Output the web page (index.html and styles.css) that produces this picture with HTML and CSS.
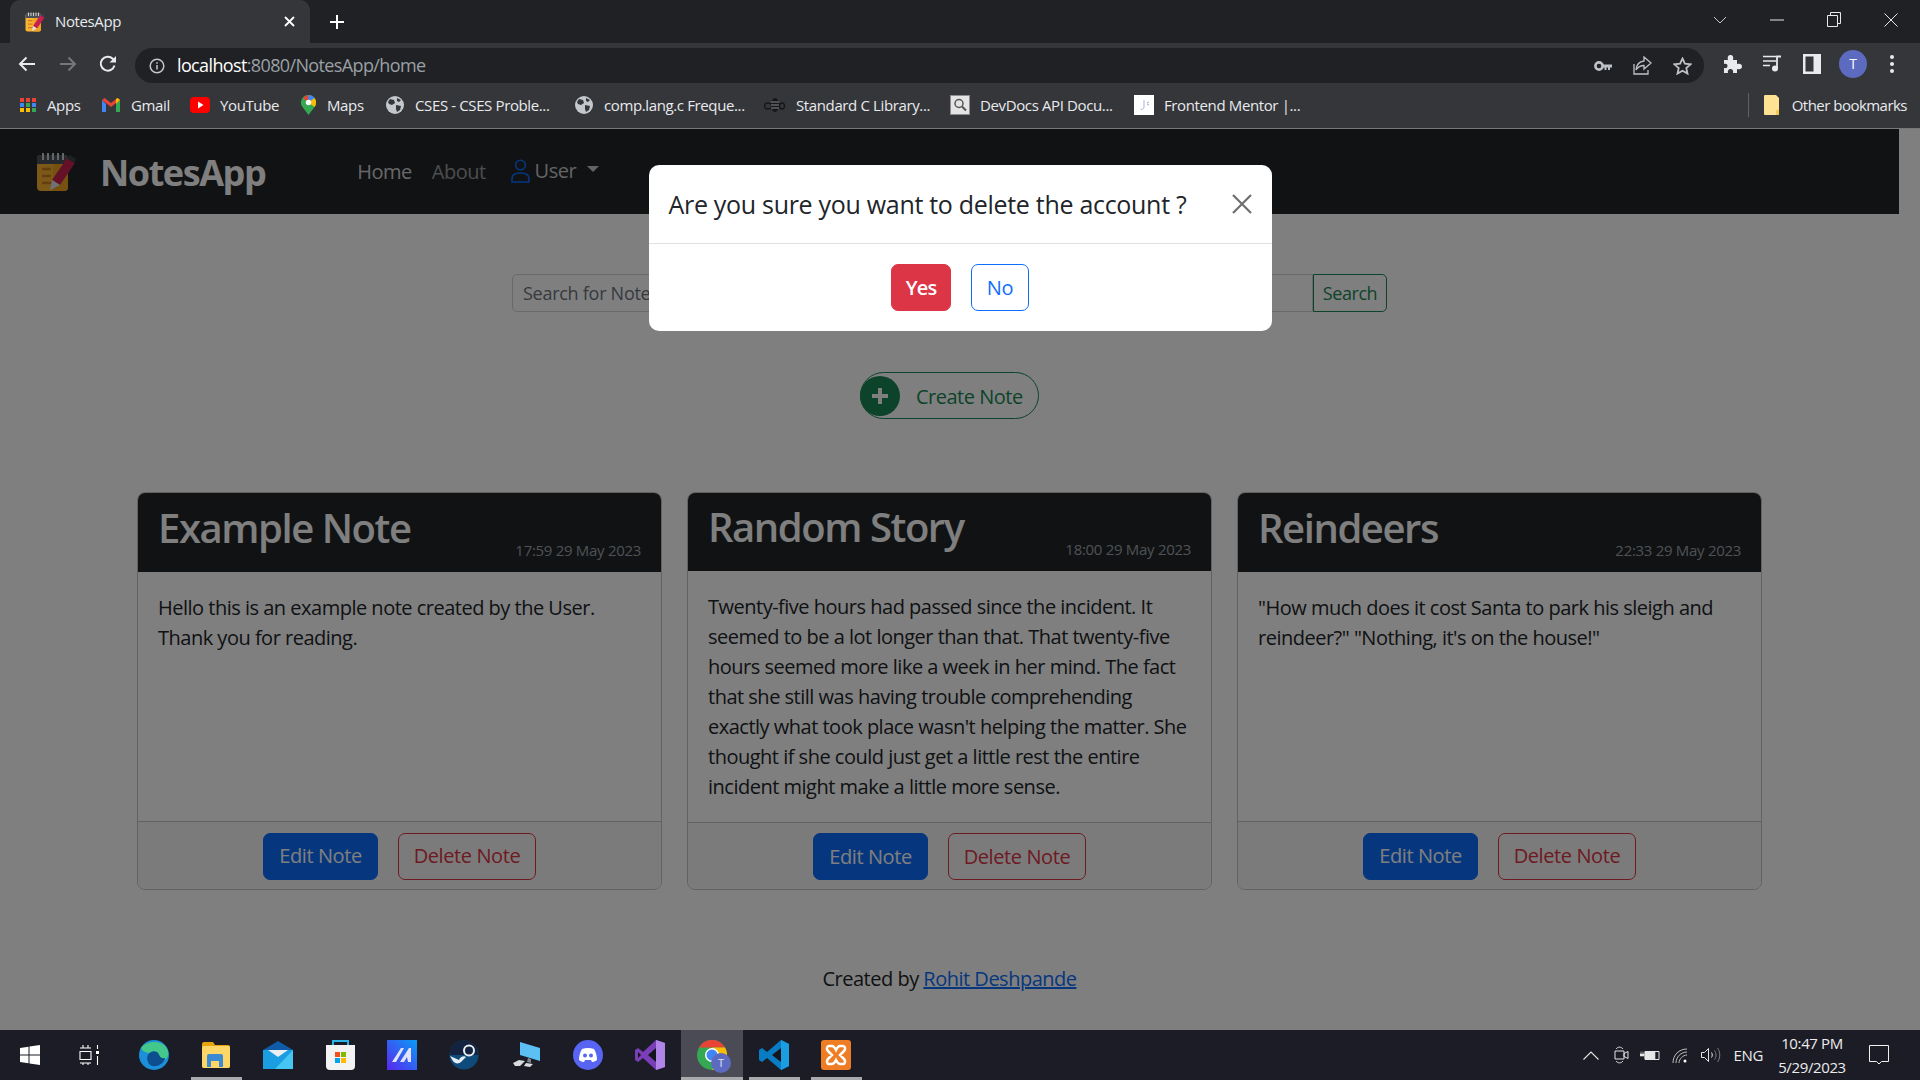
FILE: index.html
```html
<!DOCTYPE html>
<html lang="en">
<head>
  <meta charset="UTF-8" />
  <title>NotesApp</title>
  <link rel="stylesheet" href="styles.css">
</head>
<body>
  <svg class="defs" width="0" height="0">
    <symbol id="noteLogo" viewBox="0 0 40 40">
      <rect x="1" y="3" width="31" height="36" rx="4" fill="#f9b233"/>
      <path d="M17 10h15v25a4 4 0 0 1-4 4H17z" fill="#eea321"/>
      <path d="M1 12V7a4 4 0 0 1 4-4h23a4 4 0 0 1 4 4v5z" fill="#4a5058"/>
      <path d="M7 1v7M12 1v7M17 1v7M22 1v7M27 1v7" stroke="#c9ccd1" stroke-width="2"/>
      <path d="M6 17h9M6 24h9M6 31h11" stroke="#c77f1a" stroke-width="2.5"/>
      <path d="M31 6l8 5-15 22-8-5z" fill="#c8204e"/>
      <path d="M34 3l6 4-2 4-7-5z" fill="#39424c"/>
      <path d="M16 28l8 5-10 5z" fill="#dfe3e8"/>
    </symbol>
    <symbol id="globe" viewBox="0 0 18 18">
      <circle cx="9" cy="9" r="9" fill="#c4c7cb"/>
      <path d="M4 3l4 1 1 3-3 2-3-1-1-2zM10 9l5 1-1 4-3 2-1-3zM11 2l4 2-2 2-2-1z" fill="#35363a"/>
    </symbol>
  </svg>

  <div class="chrome">
    <div class="tabstrip">
      <div class="tab">
        <svg class="favicon" width="20" height="20"><use href="#noteLogo"/></svg>
        <span class="tab-title">NotesApp</span>
        <svg class="tab-close" width="11" height="11" viewBox="0 0 11 11"><path d="M1 1l9 9M10 1l-9 9" stroke="#fff" stroke-width="1.8"/></svg>
      </div>
      <svg class="newtab" width="16" height="16" viewBox="0 0 16 16"><path d="M8 1v14M1 8h14" stroke="#fff" stroke-width="2"/></svg>
      <div class="winctl">
        <svg width="14" height="8" viewBox="0 0 14 8"><path d="M1 1l6 6 6-6" fill="none" stroke="#c8c9cb"/></svg>
        <svg width="14" height="2" viewBox="0 0 14 2"><path d="M0 1h14" stroke="#e8e8e8"/></svg>
        <svg width="14" height="15" viewBox="0 0 14 15"><path d="M.5 3.5h10v11H.5zM3.5 3V.5h10v11H11" fill="none" stroke="#e8e8e8"/></svg>
        <svg width="14" height="14" viewBox="0 0 14 14"><path d="M.5.5l13 13M13.5.5l-13 13" stroke="#e8e8e8"/></svg>
      </div>
    </div>

    <div class="toolbar">
      <svg width="18" height="16" viewBox="0 0 18 16"><path d="M17 8H2M8.500 1.500L2 8l6.500 6.500" fill="none" stroke="#e8eaed" stroke-width="2"/></svg>
      <svg class="tool-fwd" width="18" height="16" viewBox="0 0 18 16"><path d="M1 8h15M9.500 1.500L16 8l-6.500 6.500" fill="none" stroke="#75777a" stroke-width="2"/></svg>
      <svg class="tool-reload" width="18" height="18" viewBox="0 0 18 18"><path d="M15.500 10.500A7 7 0 1 1 13.800 3.800L16 6" fill="none" stroke="#e8eaed" stroke-width="2"/><path d="M17 1v6.500h-6.500z" fill="#e8eaed"/></svg>
      <div class="omnibox">
        <svg width="16" height="16" viewBox="0 0 16 16"><circle cx="8" cy="8" r="6.800" fill="none" stroke="#c4c7c9" stroke-width="1.500"/><path d="M8 7v4.500M8 4.300v1.500" stroke="#c4c7c9" stroke-width="1.500"/></svg>
        <span class="url"><span class="url-host">localhost</span>:8080/NotesApp/home</span>
        <div class="omni-icons">
          <svg width="18" height="12" viewBox="0 0 18 12"><circle cx="5" cy="6" r="3.600" fill="none" stroke="#bdc1c6" stroke-width="2.600"/><path d="M9 4.500h9v3h-2v2.500h-2V7.500h-1.500V10h-2V7.500H9z" fill="#bdc1c6"/></svg>
          <svg width="19" height="19" viewBox="0 0 19 19"><path d="M1 8v10h14v-4" fill="none" stroke="#bdc1c6" stroke-width="1.300"/><path d="M11 1l7 6-7 6V9.500C7 9.500 5 11 3 14c.5-5 3-8.500 8-9z" fill="none" stroke="#bdc1c6" stroke-width="1.300"/></svg>
          <svg width="19" height="18" viewBox="0 0 19 18"><path d="M9.500 1.500l2.400 5.200 5.600.6-4.200 3.800 1.200 5.500-5-2.900-5 2.900 1.200-5.500L1.500 7.300l5.600-.6z" fill="none" stroke="#bdc1c6" stroke-width="1.800"/></svg>
        </div>
      </div>
      <div class="tool-right">
        <svg width="19" height="19" viewBox="0 0 19 19"><path d="M1 6h4c-1-4 1-5 2.500-5S11 2 10 6h4v4c4-1 5 1 5 2.500S18 16 14 15v4h-4c.6-3-1-4-2.500-4S4.400 16 5 19H1v-5c2.500.6 3.500-.5 3.500-2S3.500 9.500 1 10z" fill="#e8eaed"/></svg>
        <svg width="19" height="17" viewBox="0 0 19 17"><path d="M0 1.500h13M0 6h13M0 10.500h7" stroke="#e8eaed" stroke-width="1.600"/><path d="M14 13V1.500h4" fill="none" stroke="#e8eaed" stroke-width="1.800"/><circle cx="12" cy="13.500" r="3" fill="#e8eaed"/></svg>
        <svg width="18" height="20" viewBox="0 0 18 20"><path d="M0 0h18v20H0z" fill="#e8eaed"/><path d="M2.500 2.500h8v15h-8z" fill="#35363a"/></svg>
        <span class="avatar">T</span>
        <svg class="tool-menu" width="4" height="18" viewBox="0 0 4 18"><circle cx="2" cy="2" r="2" fill="#e8eaed"/><circle cx="2" cy="9" r="2" fill="#e8eaed"/><circle cx="2" cy="16" r="2" fill="#e8eaed"/></svg>
      </div>
    </div>

    <div class="bookmarks">
      <a class="bm bm-apps">
        <svg width="16" height="16" viewBox="0 0 16 16">
          <path d="M0 1h4v4H0z" fill="#ea4335"/><path d="M6 1h4v4H6z" fill="#ea4335"/><path d="M12 1h4v4h-4z" fill="#ea4335"/>
          <path d="M0 6h4v4H0z" fill="#4285f4"/><path d="M6 6h4v4H6z" fill="#34a853"/><path d="M12 6h4v4h-4z" fill="#4285f4"/>
          <path d="M0 11h4v4H0z" fill="#fbbc04"/><path d="M6 11h4v4H6z" fill="#fbbc04"/><path d="M12 11h4v4h-4z" fill="#34a853"/>
        </svg>Apps</a>
      <a class="bm bm-gmail">
        <svg width="18" height="14" viewBox="0 0 18 14"><path d="M0 2v12h4V6z" fill="#4285f4"/><path d="M14 6v8h4V2z" fill="#34a853"/><path d="M0 2l9 7 9-7-2.500-2L9 5 2.500 0z" fill="#ea4335"/><path d="M14 6l4-4-2.500-2L14 1z" fill="#fbbc04"/></svg>Gmail</a>
      <a class="bm bm-youtube">
        <svg width="20" height="16" viewBox="0 0 20 16"><rect width="20" height="16" rx="4" fill="#f00"/><path d="M8 4.500l5.500 3.500L8 11.500z" fill="#fff"/></svg>YouTube</a>
      <a class="bm bm-maps">
        <svg width="15" height="20" viewBox="0 0 15 20"><path d="M7.500 0a7.500 7.500 0 0 1 6 12L7.500 20 1.500 12a7.500 7.500 0 0 1 6-12z" fill="#34a853"/><path d="M2 3.500A7.500 7.500 0 0 1 7.500 0v7z" fill="#ea4335"/><path d="M7.500 0a7.500 7.500 0 0 1 6 3L7.500 7.500z" fill="#4285f4"/><path d="M13.500 3a7.500 7.500 0 0 1 0 9L7.500 7.500z" fill="#fbbc04"/><circle cx="7.500" cy="7.500" r="2.700" fill="#fff"/></svg>Maps</a>
      <a class="bm bm-cses"><svg width="18" height="18"><use href="#globe"/></svg>CSES - CSES Proble...</a>
      <a class="bm bm-comp"><svg width="18" height="18"><use href="#globe"/></svg>comp.lang.c Freque...</a>
      <a class="bm bm-std">
        <svg width="21" height="16" viewBox="0 0 21 16"><ellipse cx="11" cy="8" rx="4" ry="7" fill="#15161a"/><ellipse cx="4" cy="9" rx="3.500" ry="3" fill="none" stroke="#15161a" stroke-width="1.300"/><ellipse cx="18" cy="9" rx="2.500" ry="3" fill="none" stroke="#15161a" stroke-width="1.300"/><path d="M7 5h8M7 8h8M7 11h8" stroke="#8a8c90"/></svg>Standard C Library...</a>
      <a class="bm bm-dev">
        <svg width="20" height="20" viewBox="0 0 20 20"><rect x=".5" y=".5" width="19" height="19" fill="#e4e4e4" stroke="#8c8c8c"/><circle cx="9" cy="8.500" r="4" fill="none" stroke="#555" stroke-width="1.500"/><path d="M12 11.500l4 4" stroke="#555" stroke-width="2"/></svg>DevDocs API Docu...</a>
      <a class="bm bm-fm">
        <svg width="20" height="20" viewBox="0 0 20 20"><rect width="20" height="20" fill="#fff"/><path d="M10 5v7c0 2-2 3-3.500 2" fill="none" stroke="#a7b5dd"/><path d="M13 8l2-1M13 9l2 1" stroke="#9ca6c4"/></svg>Frontend Mentor |...</a>
      <div class="bm-other">
        <svg width="15" height="20" viewBox="0 0 15 20"><path d="M0 1a1 1 0 0 1 1-1h11l3 3v16a1 1 0 0 1-1 1H1a1 1 0 0 1-1-1z" fill="#fde293"/><path d="M12 20v-5h3v5z" fill="#f2c94c"/></svg>
        <span>Other bookmarks</span>
      </div>
    </div>
  </div>

  <div class="page">
    <div class="app">
      <nav class="navbar">
        <svg class="brand-logo" width="40" height="40"><use href="#noteLogo"/></svg>
        <span class="brand">NotesApp</span>
        <a class="nav-link nav-active">Home</a>
        <a class="nav-link">About</a>
        <a class="nav-link nav-user">
          <svg width="19" height="24" viewBox="0 0 19 24"><circle cx="9.500" cy="6" r="4.800" fill="none" stroke="#0d6efd" stroke-width="1.600"/><path d="M1 23v-3.500C1 16 4 14 9.500 14S18 16 18 19.500V23z" fill="none" stroke="#0d6efd" stroke-width="1.600"/></svg>
          <span>User</span><i class="caret"></i>
        </a>
      </nav>

      <form class="search">
        <input class="search-input" type="text" placeholder="Search for Notes">
        <button class="search-btn" type="button">Search</button>
      </form>

      <div class="create-row">
        <a class="create-btn">
          <span class="create-icon">
            <svg width="18" height="18" viewBox="0 0 18 18"><path d="M9 1v16M1 9h16" stroke="#fff" stroke-width="4"/></svg>
          </span>
          <span class="create-label">Create Note</span>
        </a>
      </div>

      <section class="notes">
        <article class="note-card">
          <header class="note-head">
            <h2>Example Note</h2>
            <small>17:59 29 May 2023</small>
          </header>
          <p class="note-body">Hello this is an example note created by the User. Thank you for reading.</p>
          <footer class="note-foot">
            <a class="btn btn-edit">Edit Note</a>
            <a class="btn btn-delete">Delete Note</a>
          </footer>
        </article>
        <article class="note-card">
          <header class="note-head">
            <h2>Random Story</h2>
            <small>18:00 29 May 2023</small>
          </header>
          <p class="note-body">Twenty-five hours had passed since the incident. It seemed to be a lot longer than that. That twenty-five hours seemed more like a week in her mind. The fact that she still was having trouble comprehending exactly what took place wasn't helping the matter. She thought if she could just get a little rest the entire incident might make a little more sense.</p>
          <footer class="note-foot">
            <a class="btn btn-edit">Edit Note</a>
            <a class="btn btn-delete">Delete Note</a>
          </footer>
        </article>
        <article class="note-card">
          <header class="note-head">
            <h2>Reindeers</h2>
            <small>22:33 29 May 2023</small>
          </header>
          <p class="note-body">"How much does it cost Santa to park his sleigh and reindeer?" "Nothing, it's on the house!"</p>
          <footer class="note-foot">
            <a class="btn btn-edit">Edit Note</a>
            <a class="btn btn-delete">Delete Note</a>
          </footer>
        </article>
      </section>

      <p class="credit">Created by <a href="#">Rohit Deshpande</a></p>
    </div>

    <div class="backdrop">
      <div class="modal">
        <div class="modal-head">
          <h5>Are you sure you want to delete the account ?</h5>
          <svg width="20" height="20" viewBox="0 0 20 20"><path d="M1 1l18 18M19 1L1 19" stroke="#6f6f6f" stroke-width="2.200"/></svg>
        </div>
        <div class="modal-body">
          <a class="btn btn-yes">Yes</a>
          <a class="btn btn-no">No</a>
        </div>
      </div>
    </div>
  </div>

  <div class="taskbar">
    <div class="task-start">
      <svg width="20" height="20" viewBox="0 0 20 20"><path d="M0 3l8.500-1.200V9.500H0zM9.500 1.600L20 0v9.500H9.500zM0 10.500h8.500v7.700L0 17zM9.500 10.500H20V20L9.500 18.400z" fill="#fff"/></svg>
    </div>
    <div class="task-view">
      <svg width="20" height="20" viewBox="0 0 20 20"><path d="M1 3h11M1 18h11M1 6.500h11v8H1z M4 3V0M9 3V0M4 18v2M9 18v2" fill="none" stroke="#fff" stroke-width="1.100"/><rect x="17" y="6" width="3" height="3" fill="#fff"/><path d="M18.500 0v4M18.500 11v9" stroke="#fff" stroke-width="1.100"/></svg>
    </div>
    <div class="task-item">
      <svg width="30" height="30" viewBox="0 0 30 30"><circle cx="15" cy="15" r="15" fill="#1b8fd8"/><path d="M2 8C6 1 25-2 29 11c1 5-1 9-6 9-4 0-3-3-7-5C10 12 5 14 2 8z" fill="#43c78a"/><path d="M9 22c-3-7 3-13 9-10 3 2 2 7 8 6-2 9-15 11-17 4z" fill="#0d4e8f"/></svg>
    </div>
    <div class="task-item task-open">
      <svg width="28" height="26" viewBox="0 0 28 26"><path d="M0 2a2 2 0 0 1 2-2h9l2 3h13a2 2 0 0 1 2 2v19a2 2 0 0 1-2 2H2a2 2 0 0 1-2-2z" fill="#e5a50e"/><rect y="4" width="28" height="22" rx="2" fill="#fcd768"/><path d="M5 25V14a2 2 0 0 1 2-2h12a2 2 0 0 1 2 2v11h-4v-6H9v6z" fill="#3a8ad4"/></svg>
    </div>
    <div class="task-item">
      <svg width="30" height="28" viewBox="0 0 30 28"><path d="M0 9L15 0l15 9z" fill="#0f5ba7"/><path d="M0 9h30v19H0z" fill="#1b9de2"/><path d="M5 9h20l-10 7z" fill="#e9eef2"/><path d="M30 9v19H12z" fill="#46c6f2"/></svg>
    </div>
    <div class="task-item">
      <svg width="29" height="30" viewBox="0 0 29 30"><path d="M7 6V1h15v5" fill="none" stroke="#2bb3e6" stroke-width="2"/><path d="M0 5h29v21a4 4 0 0 1-4 4H4a4 4 0 0 1-4-4z" fill="#f3f3f3"/><path d="M9 12h5v5H9z" fill="#f25022"/><path d="M15 12h5v5h-5z" fill="#7fba00"/><path d="M9 18h5v5H9z" fill="#00a4ef"/><path d="M15 18h5v5h-5z" fill="#ffb900"/></svg>
    </div>
    <div class="task-item">
      <svg width="30" height="30" viewBox="0 0 30 30"><defs><linearGradient id="appGrad" x1="0" y1="1" x2="1" y2="0"><stop offset="0" stop-color="#5a26f0"/><stop offset="1" stop-color="#0a9cf5"/></linearGradient></defs><rect width="30" height="30" fill="url(#appGrad)"/><path d="M5 22L14 8h3L9 22zM13 22l9-14h2v14h-3l-1-5-3 5z" fill="#e4e2ff"/></svg>
    </div>
    <div class="task-item">
      <svg width="30" height="30" viewBox="0 0 30 30"><circle cx="15" cy="15" r="14.500" fill="#0e4a7a"/><path d="M1 12C2 6 8 .5 15 .5 23 .5 29 7 29 15H1z" fill="#13223f"/><circle cx="20" cy="10.500" r="5" fill="none" stroke="#e8edf2" stroke-width="2"/><path d="M1 16l9 4c1-3 5-5 7-3l-5 5c-2 2-6 2-8-1z" fill="#e8edf2"/></svg>
    </div>
    <div class="task-item">
      <svg width="28" height="28" viewBox="0 0 28 28"><path d="M8 1l20 6v13L8 14z" fill="#5cc0f5"/><path d="M16 17l3 1v4l-4-1z" fill="#7d8389"/><path d="M1 22l6-3 6 1-5 5H3zM14 22l7 1-3 3-6-1z" fill="#d8dadd"/></svg>
    </div>
    <div class="task-item">
      <svg width="30" height="30" viewBox="0 0 30 30"><circle cx="15" cy="15" r="15" fill="#5865f2"/><path d="M9 9c4-1.500 8-1.500 12 0 2 3 3 7 3 11-1.500 1-3 2-5 2l-1-2h-6l-1 2c-2 0-3.500-1-5-2 0-4 1-8 3-11z" fill="#fff"/><circle cx="12" cy="15.500" r="2" fill="#5865f2"/><circle cx="18" cy="15.500" r="2" fill="#5865f2"/></svg>
    </div>
    <div class="task-item">
      <svg width="30" height="30" viewBox="0 0 30 30"><path d="M21 0l9 3v24l-9 3-13-12-5 4-3-2V10l3-2 5 4z" fill="#7a3fb8"/><path d="M21 0l9 3v24l-9 3z" fill="#b184e8"/><path d="M21 8l-8 7 8 7z" fill="#14151d"/><path d="M3 12v6l3-3z" fill="#14151d"/></svg>
    </div>
    <div class="task-item task-chrome">
      <svg width="30" height="30" viewBox="0 0 30 30"><circle cx="15" cy="15" r="15" fill="#34a853"/><path d="M2 7.500A15 15 0 0 1 28 7.500H15z" fill="#ea4335"/><path d="M15 7.500h13A15 15 0 0 1 15 30l6-12z" fill="#fbbc04"/><circle cx="15" cy="15" r="7" fill="#fff"/><circle cx="15" cy="15" r="5.500" fill="#4285f4"/></svg>
      <span class="task-badge">T</span>
    </div>
    <div class="task-item task-open">
      <svg width="30" height="30" viewBox="0 0 30 30"><path d="M22 0l8 4v22l-8 4-14-12-5 4-3-2V10l3-2 5 4z" fill="#0a7cc4"/><path d="M22 0l8 4v22l-8 4z" fill="#1b9de2"/><path d="M22 8l-9 7 9 7z" fill="#14151d"/></svg>
    </div>
    <div class="task-item task-open">
      <svg width="30" height="30" viewBox="0 0 30 30"><rect width="30" height="30" rx="3" fill="#ee7d23"/><path d="M8 6h3c2 0 3 2 4 4 1-2 2-4 4-4h3c2 0 3 3 1 5l-4 4 4 4c2 2 1 5-1 5h-3c-2 0-3-2-4-4-1 2-2 4-4 4H8c-2 0-3-3-1-5l4-4-4-4c-2-2-1-5 1-5z" fill="none" stroke="#fff" stroke-width="2.500"/></svg>
    </div>
    <div class="tray">
      <svg width="16" height="9" viewBox="0 0 16 9"><path d="M.5 8.500L8 1l7.500 7.500" fill="none" stroke="#e6e6e6" stroke-width="1.100"/></svg>
      <svg class="tray-video" width="15" height="18" viewBox="0 0 15 18"><path d="M1 5h9v8H1zM10 7.500l4-2v7l-4-2zM2 3c2-2.500 5-2.500 7 0M2 15c2 2.500 5 2.500 7 0" fill="none" stroke="#e6e6e6"/></svg>
      <svg class="tray-battery" width="20" height="12" viewBox="0 0 20 12"><path d="M5 2.500h14v8H5z" fill="none" stroke="#e6e6e6"/><path d="M5 3h10v7H5zM0 5h4v2H0zM1 2.500v2.500M3 2.500v2.500" fill="#e6e6e6" stroke="#e6e6e6" stroke-width=".6"/></svg>
      <svg width="16" height="15" viewBox="0 0 16 15"><path d="M1 15C1 7 7 1 15 1M4 15c0-6 5-11 11-11M7 15c0-4 4-8 8-8" fill="none" stroke="#bfbfbf"/><circle cx="13" cy="13" r="1.500" fill="#fff"/></svg>
      <svg class="tray-sound" width="20" height="16" viewBox="0 0 20 16"><path d="M.5 5.500h3l4-4v13l-4-4h-3z" fill="none" stroke="#e6e6e6"/><path d="M10.500 5.500c1 1.500 1 3.500 0 5" fill="none" stroke="#e6e6e6"/><path d="M13.500 3.500c2 2.500 2 6.500 0 9M16.500 1c3 3.500 3 10.500 0 14" fill="none" stroke="#7d7e82"/></svg>
      <span class="tray-lang">ENG</span>
      <span class="tray-clock">10:47 PM<br>5/29/2023</span>
      <svg class="tray-note" width="20" height="20" viewBox="0 0 20 20"><path d="M.5.500h19v16h-7L10 19l-2.500-2.500h-7z" fill="none" stroke="#f0f0f0"/></svg>
    </div>
  </div>
</body>
</html>
```
FILE: styles.css
```css
* {
  box-sizing: border-box;
  letter-spacing: -0.025em;
}
body {
  font-family: "Open Sans", "Noto Sans", sans-serif;
  margin: 0;
  height: 1080px;
  overflow: hidden;
  display: flex;
  flex-direction: column;
  background-color: #fff;
  color: #212529;
  font-size: 20px;
  line-height: 30px;
}
a {
  text-decoration: none;
}
.defs {
  position: absolute;
}

/* browser */
.chrome {
  height: 129px;
  background-color: #35363a;
  border-bottom: 1px solid #77787a;
  color: #e8eaed;
}
.tabstrip {
  height: 43px;
  background-color: #202124;
  display: flex;
  align-items: center;
  padding-left: 10px;
}
.tab {
  width: 300px;
  height: 43px;
  background-color: #35363a;
  border-radius: 10px 10px 0 0;
  display: flex;
  align-items: center;
  padding: 0 15px;
  font-size: 15px;
}
.tab-title {
  margin-left: 10px;
  margin-top: -2px;
  flex: 1;
}
.newtab {
  margin-left: 19px;
}
.winctl {
  margin-left: auto;
  margin-top: -4px;
  display: flex;
  align-items: center;
  gap: 43px;
  padding-right: 22px;
}
.toolbar {
  height: 41px;
  display: flex;
  align-items: center;
  padding-left: 18px;
}
.tool-fwd {
  margin-left: 23px;
}
.tool-reload {
  margin-left: 22px;
}
.omnibox {
  margin-left: 18px;
  width: 1569px;
  height: 35px;
  margin-top: 4px;
  background-color: #202124;
  border-radius: 18px;
  display: flex;
  align-items: center;
  padding: 0 12px 0 14px;
  font-size: 18px;
}
.url {
  margin-left: 12px;
  margin-top: -2px;
  color: #9aa0a6;
  letter-spacing: -0.035em;
}
.url-host {
  color: #fff;
  letter-spacing: -0.035em;
}
.omni-icons {
  margin-left: auto;
  display: flex;
  align-items: center;
  gap: 21px;
}
.tool-right {
  display: flex;
  align-items: center;
  margin-left: 19px;
  gap: 21px;
}
.tool-menu {
  margin-left: 3px;
}
.avatar {
  width: 28px;
  height: 28px;
  border-radius: 50%;
  background-color: #5c6bc0;
  color: #fff;
  font-size: 14px;
  display: flex;
  align-items: center;
  justify-content: center;
  margin-left: -3px;
  margin-right: -1px;
}
.bookmarks {
  height: 44px;
  display: flex;
  align-items: center;
  padding-left: 20px;
  padding-bottom: 2px;
  font-size: 15px;
}
.bm {
  display: flex;
  align-items: center;
  gap: 11px;
  flex: none;
  white-space: nowrap;
}
.bm-apps { width: 82px; }
.bm-gmail { width: 88px; }
.bm-youtube { width: 111px; gap: 10px; }
.bm-maps { width: 85px; }
.bm-cses { width: 189px; }
.bm-comp { width: 189px; }
.bm-std { width: 186px; }
.bm-dev { width: 184px; gap: 10px; }
.bm-fm { gap: 10px; }
.bm-other {
  margin-left: auto;
  display: flex;
  align-items: center;
  gap: 13px;
  padding-left: 15px;
  padding-right: 13px;
  border-left: 1px solid #5f6064;
  height: 24px;
  letter-spacing: -0.035em;
}
.bm-other span {
  letter-spacing: -0.035em;
}

/* app page */
.page {
  position: relative;
  height: 901px;
  background-color: #fff;
}
.app {
  width: 1899px;
}
.navbar {
  height: 85px;
  background-color: #212529;
  display: flex;
  align-items: center;
  padding-left: 36px;
}
.brand {
  margin-left: 24px;
  margin-top: 2px;
  font-size: 36px;
  font-weight: 700;
  color: #fff;
  letter-spacing: -0.04em;
}
.nav-link {
  color: rgba(255,255,255,0.55);
  margin-left: 20px;
}
.nav-active {
  color: rgba(255,255,255,0.8);
  margin-left: 92px;
}
.nav-user {
  margin-left: 25px;
  display: flex;
  align-items: center;
  gap: 5px;
  margin-top: -1px;
  color: rgba(255,255,255,0.75);
}
.caret {
  margin-left: 6px;
  margin-bottom: 4px;
  border-top: 6px solid rgba(255,255,255,0.75);
  border-left: 6px solid transparent;
  border-right: 6px solid transparent;
}
.search {
  width: 875px;
  margin: 60px auto 0;
  display: flex;
  height: 38px;
}
.search-input {
  flex: 1;
  border: 1px solid #ced4da;
  border-radius: 5px 0 0 5px;
  font: inherit;
  font-size: 18px;
  padding: 0 10px;
  color: #212529;
}
.search-input::placeholder {
  color: #6c757d;
  letter-spacing: -0.015em;
}
.search-btn {
  width: 74px;
  background: none;
  border: 1px solid #198754;
  border-radius: 0 5px 5px 0;
  color: #198754;
  font: inherit;
  font-size: 18px;
  padding: 0;
}
.create-row {
  display: flex;
  justify-content: center;
  margin-top: 60px;
}
.create-btn {
  width: 179px;
  height: 47px;
  border: 1px solid #198754;
  border-radius: 24px;
  color: #198754;
  display: flex;
  align-items: center;
  gap: 16px;
}
.create-label {
  margin-top: 2px;
}
.create-icon {
  width: 40px;
  height: 40px;
  margin-left: -1px;
  border-radius: 50%;
  background-color: #198754;
  display: flex;
  align-items: center;
  justify-content: center;
}
.notes {
  width: 1625px;
  margin: 73px auto 0;
  display: grid;
  grid-template-columns: repeat(3, 1fr);
  gap: 25px;
}
.note-card {
  height: 398px;
  border: 1px solid #c4c5c7;
  border-radius: 8px;
  display: flex;
  flex-direction: column;
  overflow: hidden;
}
.note-head {
  height: 79px;
  background-color: #212529;
  color: #fff;
  display: flex;
  justify-content: space-between;
  align-items: flex-end;
  padding: 0 20px 12px;
}
.note-head h2 {
  margin: 2px 0 0;
  font-size: 40px;
  line-height: 60px;
  font-weight: 600;
  align-self: center;
  letter-spacing: -0.036em;
}
.note-head small {
  font-size: 15px;
  line-height: 20px;
  color: #9ea3a8;
  letter-spacing: -0.02em;
}
.note-body {
  flex: 1;
  margin: 0;
  padding: 21px 20px 20px;
}
.note-foot {
  height: 68px;
  border-top: 1px solid #c4c5c7;
  background-color: #f7f7f7;
  display: flex;
  justify-content: center;
  align-items: center;
  gap: 20px;
  padding-top: 1px;
}
.btn {
  height: 47px;
  display: flex;
  align-items: center;
  justify-content: center;
  border-radius: 7px;
  border: 1px solid;
  letter-spacing: -0.02em;
}
.btn-edit {
  width: 115px;
  background-color: #0d6efd;
  border-color: #0d6efd;
  color: #fff;
}
.btn-delete {
  width: 138px;
  border-color: #dc3545;
  color: #dc3545;
}
.credit {
  text-align: center;
  margin: 74px 0 0;
}
.credit a {
  color: #0d6efd;
  text-decoration: underline;
}

/* dialog */
.backdrop {
  position: absolute;
  inset: 0;
  background-color: rgba(0,0,0,0.5);
  display: flex;
  justify-content: center;
  align-items: flex-start;
  padding-top: 36px;
}
.modal {
  width: 623px;
  height: 166px;
  background-color: #fff;
  border-radius: 10px;
}
.modal-head {
  height: 79px;
  border-bottom: 1px solid #dee2e6;
  display: flex;
  align-items: center;
  justify-content: space-between;
  padding: 0 20px;
}
.modal-head h5 {
  margin: 0;
  font-size: 25px;
  font-weight: 400;
  letter-spacing: -0.012em;
}
.modal-body {
  display: flex;
  justify-content: center;
  gap: 20px;
  padding-top: 20px;
}
.btn-yes {
  width: 60px;
  background-color: #dc3545;
  border-color: #dc3545;
  color: #fff;
  font-weight: 600;
  letter-spacing: -0.04em;
}
.btn-no {
  width: 58px;
  border-color: #0d6efd;
  color: #0d6efd;
}

/* windows taskbar */
.taskbar {
  height: 50px;
  background-color: #1b1c26;
  display: flex;
  align-items: center;
}
.task-start {
  width: 60px;
  display: flex;
  justify-content: center;
}
.task-view {
  width: 63px;
  display: flex;
  justify-content: center;
  padding-right: 5px;
}
.task-item {
  width: 62px;
  height: 50px;
  position: relative;
  display: flex;
  align-items: center;
  justify-content: center;
}
.task-open::after,
.task-chrome::after {
  content: "";
  position: absolute;
  left: 6px;
  right: 5px;
  bottom: 0;
  height: 3px;
  background-color: #a9a9ad;
}
.task-chrome {
  background-color: #4a4b55;
}
.task-chrome::after {
  left: 0;
  right: 0;
}
.task-badge {
  position: absolute;
  right: 12px;
  bottom: 7px;
  width: 20px;
  height: 20px;
  border-radius: 50%;
  background-color: #5c6bc0;
  color: #dfe3f5;
  font-size: 11px;
  line-height: 20px;
  text-align: center;
}
.tray {
  margin-left: auto;
  display: flex;
  align-items: center;
  color: #ececec;
  font-size: 15px;
  line-height: 24px;
  padding-right: 31px;
  gap: 12px;
}
.tray-video {
  margin-left: 3px;
}
.tray-battery {
  margin-left: -1px;
}
.tray-sound {
  margin-left: 1px;
}
.tray-lang {
  margin-left: 1px;
}
.tray-clock {
  width: 70px;
  text-align: center;
  margin-left: 2px;
  margin-right: 10px;
}
```
